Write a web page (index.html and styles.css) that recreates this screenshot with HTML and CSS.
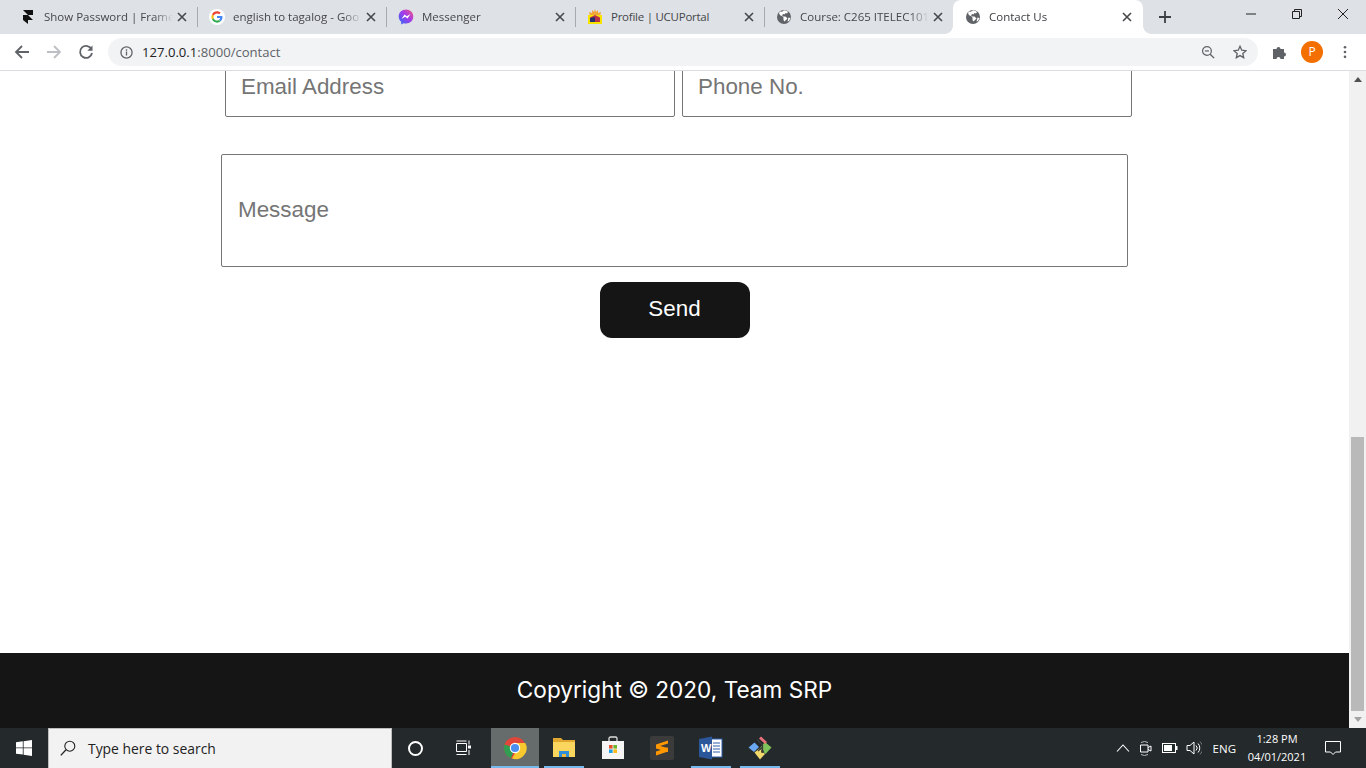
FILE: index.html
```html
<!DOCTYPE html>
<html lang="en">
<head>
  <meta charset="UTF-8">
  <meta name="viewport" content="width=device-width, initial-scale=1.0">
  <title>Contact Us</title>
  <link rel="stylesheet" href="styles.css">
</head>
<body>
  <svg class="defs" width="0" height="0">
    <symbol id="close" viewBox="0 0 10 10"><path d="M1 1l8 8M9 1l-8 8" stroke="#45474a" stroke-width="1.6" fill="none"/></symbol>
    <symbol id="globe" viewBox="0 0 16 16"><circle cx="8" cy="8" r="7" fill="#5f6368"/><path d="M8 1.200c-1 .6-1.500 1.300-2.500 1.500L4 2.400 3 4l1 2.200 2 .8 1.500 1.500V11l1 1.500L10 11l1.500-1.500-2-2H7L6 6l1.500-1 1 .5 1-1.500L11 4.500 12 3c-1-1-2.500-1.800-4-1.800z" fill="#fff"/><path d="M12.500 8.500l2 .5-1.500 3-1.500.5z" fill="#fff"/></symbol>
  </svg>

  <div class="tabstrip">
    <div class="tab">
      <svg class="favicon" viewBox="0 0 16 16"><path d="M3 1h10v5H8zM3 6h5l5 5H8v4l-5-4z" fill="#111"/></svg>
      <span class="tab-title">Show Password | Frame</span>
      <svg class="tab-close"><use href="#close"/></svg>
    </div>
    <div class="tab">
      <svg class="favicon" viewBox="0 0 48 48"><circle cx="24" cy="24" r="24" fill="#fff"/><path fill="#EA4335" d="M24 13.500c2.900 0 5 1.200 6.300 2.300l4.600-4.500C32.100 8.700 28.400 7 24 7c-6.500 0-12.200 3.700-14.900 9.200l5.300 4.100C15.700 16.300 19.500 13.500 24 13.500z"/><path fill="#4285F4" d="M40.400 24.400c0-1.400-.1-2.400-.4-3.400H24v6.200h9.400c-.2 1.500-1.200 3.900-3.500 5.400l5.200 4c3.200-2.900 5.300-7.200 5.300-12.200z"/><path fill="#FBBC05" d="M14.400 27.700c-.4-1.200-.6-2.400-.6-3.700s.2-2.500.6-3.700l-5.300-4.100C8 18.500 7.400 21.200 7.400 24s.6 5.500 1.700 7.800z"/><path fill="#34A853" d="M24 41c4.500 0 8.200-1.500 11-4l-5.200-4c-1.400 1-3.300 1.700-5.800 1.700-4.500 0-8.300-3-9.600-7l-5.300 4.100C11.800 37.300 17.500 41 24 41z"/></svg>
      <span class="tab-title">english to tagalog - Goo</span>
      <svg class="tab-close"><use href="#close"/></svg>
    </div>
    <div class="tab">
      <svg class="favicon" viewBox="0 0 16 16"><defs><linearGradient id="msgr" x1="0" y1="1" x2="1" y2="0"><stop offset="0" stop-color="#2a6cf6"/><stop offset=".55" stop-color="#a33bea"/><stop offset="1" stop-color="#f5587b"/></linearGradient></defs><path d="M8 .5C3.800.5.700 3.500.700 7.500c0 2.200 1 4 2.500 5.300v2.700l2.400-1.300c.8.200 1.600.3 2.400.3 4.200 0 7.300-3 7.300-7S12.200.5 8 .5z" fill="url(#msgr)"/><path d="M3.500 10l3-4.500 2.300 1.700L12.500 5l-3 4.500-2.300-1.700z" fill="#fff"/></svg>
      <span class="tab-title">Messenger</span>
      <svg class="tab-close"><use href="#close"/></svg>
    </div>
    <div class="tab">
      <svg class="favicon" viewBox="0 0 16 16"><path d="M8 0l1 3 2-2 0 3 3-1-1 4H3L2 3l3 1V1l2 2z" fill="#f2a63a"/><rect x="1" y="6" width="14" height="9" fill="#f7e400"/><path d="M3 13V8.500L8 6l5 2.500V13z" fill="#b8324a"/><path d="M3 13V9l5-1v5z" fill="#27306e"/></svg>
      <span class="tab-title tight">Profile | UCUPortal</span>
      <svg class="tab-close"><use href="#close"/></svg>
    </div>
    <div class="tab">
      <svg class="favicon"><use href="#globe"/></svg>
      <span class="tab-title">Course: C265 ITELEC101</span>
      <svg class="tab-close"><use href="#close"/></svg>
    </div>
    <div class="tab tab-active">
      <svg class="favicon"><use href="#globe"/></svg>
      <span class="tab-title">Contact Us</span>
      <svg class="tab-close"><use href="#close"/></svg>
    </div>
    <svg class="new-tab" viewBox="0 0 12 12"><path d="M6 0v12M0 6h12" stroke="#3c4043" stroke-width="1.800"/></svg>
    <div class="win-controls">
      <div class="win-btn"><svg viewBox="0 0 10 10"><path d="M0 5h10" stroke="#222" fill="none"/></svg></div>
      <div class="win-btn"><svg viewBox="0 0 10 10"><path d="M.5 2.500h7v7h-7zM2.500 2.500v-2h7v7h-2" stroke="#222" fill="none"/></svg></div>
      <div class="win-btn"><svg viewBox="0 0 10 10"><path d="M0 0l10 10M10 0L0 10" stroke="#222" fill="none"/></svg></div>
    </div>
  </div>

  <div class="toolbar">
    <svg class="nav-icon" viewBox="0 0 16 16"><path d="M15 8H2M8 2L2 8l6 6" stroke="#5f6368" stroke-width="1.800" fill="none"/></svg>
    <svg class="nav-icon" viewBox="0 0 16 16"><path d="M1 8h13M8 2l6 6-6 6" stroke="#bcbfc3" stroke-width="1.800" fill="none"/></svg>
    <svg class="nav-icon" viewBox="0 0 16 16"><path d="M13.600 5.500A6 6 0 1 0 14 9" stroke="#5f6368" stroke-width="1.800" fill="none"/><path d="M14.500 1.500v5.200H9.300z" fill="#5f6368"/></svg>
    <div class="omnibox">
      <svg class="info" viewBox="0 0 14 14"><circle cx="7" cy="7" r="6" stroke="#5f6368" stroke-width="1.400" fill="none"/><path d="M7 6v4.200M7 3.600v1.400" stroke="#5f6368" stroke-width="1.400"/></svg>
      <span class="url"><span class="url-host">127.0.0.1</span>:8000/contact</span>
      <svg class="omni-icon" viewBox="0 0 16 16"><circle cx="6.800" cy="6.800" r="5" stroke="#5f6368" stroke-width="1.400" fill="none"/><path d="M10.500 10.500L15 15" stroke="#5f6368" stroke-width="1.600"/><path d="M4.500 6.800h4.600" stroke="#5f6368" stroke-width="1.400"/></svg>
      <svg class="omni-icon" viewBox="0 0 16 16"><path d="M8 1.500l2 4.500 4.800.5-3.600 3.200 1 4.800L8 12.100 3.800 14.500l1-4.800L1.200 6.500 6 6z" stroke="#5f6368" stroke-width="1.500" fill="none"/></svg>
    </div>
    <svg class="puzzle" viewBox="0 0 16 16"><path d="M1 5h3.500a2 2 0 1 1 4 0H12v3.500a2 2 0 1 1 0 4V15H8.500a2 2 0 1 0-4 0H1z" fill="#5f6368"/></svg>
    <div class="avatar">P</div>
    <svg class="menu-dots" viewBox="0 0 4 16"><circle cx="2" cy="2.500" r="1.500" fill="#5f6368"/><circle cx="2" cy="8" r="1.500" fill="#5f6368"/><circle cx="2" cy="13.500" r="1.500" fill="#5f6368"/></svg>
  </div>

  <div class="viewport">
    <div class="page">
      <main class="content">
        <form class="contact-form">
          <div class="form-row">
            <input class="field" type="email" placeholder="Email Address">
            <input class="field" type="text" placeholder="Phone No.">
          </div>
          <textarea class="message" placeholder="Message"></textarea>
          <button class="send" type="button">Send</button>
        </form>
      </main>
      <footer class="site-footer">Copyright © 2020, Team SRP</footer>
    </div>
    <div class="scrollbar">
      <div class="scroll-arrow"><span class="tri-up"></span></div>
      <div class="scroll-track"></div>
      <div class="scroll-thumb"></div>
      <div class="scroll-arrow"><span class="tri-down"></span></div>
    </div>
  </div>

  <div class="taskbar">
    <div class="start">
      <svg viewBox="0 0 16 16" width="16" height="16"><path d="M0 2.300l6.800-1v6.200H0zM7.600 1.200L16 0v7.500H7.600zM0 8.300h6.800v6.300L0 13.700zM7.600 8.300H16V16l-8.400-1.200z" fill="#fff"/></svg>
    </div>
    <div class="search">
      <svg viewBox="0 0 16 16" width="16" height="16"><circle cx="9.800" cy="6.200" r="5" stroke="#222" stroke-width="1.100" fill="none"/><path d="M6 9.800L.8 15.400" stroke="#222" stroke-width="1.300"/></svg>
      <span>Type here to search</span>
    </div>
    <div class="task-btn"><span class="cortana"></span></div>
    <div class="task-btn">
      <svg viewBox="0 0 16 16" width="16" height="16"><path d="M.5 3.500h10v8H.5zM.5 1h10M.5 14.500h10M13 .5v4M13 10v5" stroke="#fff" fill="none"/><rect x="12" y="5.500" width="3" height="3" fill="#fff"/></svg>
    </div>
    <div class="apps">
      <div class="app app-active app-open">
        <svg viewBox="0 0 24 24" width="24" height="24"><circle cx="12" cy="12" r="11" fill="#e0463a"/><path d="M12 12L1.500 8.500A11 11 0 0 0 8 22.300z" fill="#2f9e52"/><path d="M12 7h10.300A11 11 0 0 1 9 22.600L14 14z" fill="#f8c92f"/><circle cx="12" cy="12" r="5.200" fill="#fff"/><circle cx="12" cy="12" r="4.100" fill="#4a8ff0"/></svg>
      </div>
      <div class="app app-open">
        <svg viewBox="0 0 24 24" width="24" height="24"><path d="M1 2h8l2 2h12v17H1z" fill="#e2a72e"/><path d="M1 6h22v15H1z" fill="#fbd65e"/><path d="M7 21v-6h10v6h-3v-3h-4v3z" fill="#2f8fd8"/><rect x="10" y="18" width="4" height="3" fill="#f1b93c"/></svg>
      </div>
      <div class="app">
        <svg viewBox="0 0 24 24" width="24" height="24"><path d="M8 5V2.500A1.500 1.500 0 0 1 9.500 1h5A1.500 1.500 0 0 1 16 2.500V5" stroke="#ddd" stroke-width="1.300" fill="none"/><path d="M1 5h22v18H1z" fill="#f5f5f5"/><rect x="8" y="9" width="3.600" height="3.600" fill="#e8502a"/><rect x="12.400" y="9" width="3.600" height="3.600" fill="#6cb52d"/><rect x="8" y="13.400" width="3.600" height="3.600" fill="#1ba1e2"/><rect x="12.400" y="13.400" width="3.600" height="3.600" fill="#fbb917"/></svg>
      </div>
      <div class="app">
        <svg viewBox="0 0 24 24" width="24" height="24"><rect width="24" height="24" rx="2" fill="#3b3b3b"/><path d="M18 4.500L6 8.500v4l12 3.500v-4L10 10l8-2.500zM6 15.500v4l12-4v-4z" fill="#ff9800"/></svg>
      </div>
      <div class="app app-open">
        <svg viewBox="0 0 24 24" width="24" height="24"><rect x="9" y="3" width="14" height="18" fill="#fff" stroke="#2f5ea8"/><path d="M14 7h7M14 10h7M14 13h7M14 16h7" stroke="#2f5ea8"/><path d="M0 3l13-2.500v23L0 21z" fill="#2b579a"/><text class="word-w" x="2" y="15.500">W</text></svg>
      </div>
      <div class="app app-open">
        <svg viewBox="0 0 24 24" width="24" height="24"><path d="M6.500 6.500L11 11l-5 5-5.500-4.500z" fill="#6aa8f2"/><path d="M17 6l6.500 5.500L17.500 18 12 12z" fill="#7fc25a"/><path d="M6.500 16.500L11.500 12.500 17 18l-5 5.500z" fill="#f2d96b"/><path d="M11 2.500L13 .5l6 5.500-2 2z" fill="#e9707a"/><path d="M9 3.500l5.500 5.500v6M14.500 11l-4.500 4" stroke="#3a3a3a" stroke-width="1.300" fill="none"/><circle cx="14.500" cy="15.500" r="1.500" fill="#3a3a3a"/></svg>
      </div>
    </div>
    <div class="tray">
      <svg class="tray-icon" viewBox="0 0 14 8" width="14" height="8"><path d="M1 7.500l6-6.500 6 6.500" stroke="#fff" stroke-width="1.100" fill="none"/></svg>
      <svg class="tray-icon" viewBox="0 0 16 16" width="16" height="16"><path d="M2.500 5h7.500v7H2.500z" stroke="#fff" fill="none"/><path d="M10 7.500l3-1.500v5l-3-1.500" stroke="#fff" fill="none"/><path d="M3 2.500a7 7 0 0 1 7 0M3 14.500a7 7 0 0 0 7 0" stroke="#bbb" fill="none"/></svg>
      <svg class="tray-icon" viewBox="0 0 16 10" width="16" height="10"><rect x=".5" y=".5" width="13" height="9" stroke="#fff" fill="none"/><rect x="2" y="2" width="8" height="6" fill="#fff"/><rect x="14" y="3" width="1.500" height="4" fill="#fff"/></svg>
      <svg class="tray-icon" viewBox="0 0 16 16" width="16" height="16"><path d="M1 5.500h3L8 2v12l-4-3.500H1z" stroke="#fff" fill="none"/><path d="M10 5.500a3.500 3.500 0 0 1 0 5M12 3.500a6.500 6.500 0 0 1 0 9" stroke="#fff" fill="none"/><path d="M14 1.500a9 9 0 0 1 0 13" stroke="#777" fill="none"/></svg>
      <span class="lang">ENG</span>
      <div class="clock"><span>1:28 PM</span><span>04/01/2021</span></div>
      <svg class="notif" viewBox="0 0 16 16" width="16" height="16"><path d="M.5 1.500h15v10.500h-5L8 14.500 5.500 12h-5z" stroke="#fff" fill="none"/></svg>
    </div>
  </div>
</body>
</html>
```

FILE: styles.css
```css
* {
  box-sizing: border-box;
  margin: 0;
  padding: 0;
}

body {
  display: flex;
  flex-direction: column;
  width: 1366px;
  height: 768px;
  overflow: hidden;
  background: #fff;
  font-family: "Open Sans", "Liberation Sans", sans-serif;
}

.defs {
  display: block;
  height: 0;
}

/* browser tabs */
.tabstrip {
  display: flex;
  align-items: center;
  height: 34px;
  padding-left: 8px;
  background: #dee1e6;
}

.tab {
  display: flex;
  align-items: center;
  width: 189px;
  height: 34px;
  padding: 0 10px 0 12px;
  position: relative;
  font-size: 11.5px;
  color: #45474a;
}

.tab::after {
  content: '';
  position: absolute;
  right: -1px;
  top: 7px;
  height: 20px;
  border-right: 1px solid #a6a9ad;
}

.tab:nth-child(5)::after {
  border-right: 0;
}

.tab-active {
  width: 190px;
  padding-right: 11px;
  background: #fff;
  border-radius: 8px 8px 0 0;
  color: #3c4043;
}

/* the flared bottom corners of the open tab */
.tab-active::before,
.tab-active::after {
  content: '';
  position: absolute;
  top: auto;
  bottom: 0;
  width: 8px;
  height: 8px;
  border: 0;
}

.tab-active::before {
  left: -8px;
  background: radial-gradient(circle at 0 0, #dee1e6 7.5px, #fff 8px);
}

.tab-active::after {
  right: -8px;
  background: radial-gradient(circle at 100% 0, #dee1e6 7.5px, #fff 8px);
}

.favicon {
  flex: none;
  width: 16px;
  height: 16px;
  margin-right: 8px;
}

.tab-title {
  flex: 1;
  padding-bottom: 2px;
  overflow: hidden;
  white-space: nowrap;
  -webkit-mask-image: linear-gradient(to right, #000 85%, transparent);
  mask-image: linear-gradient(to right, #000 85%, transparent);
}

.tab-title.tight {
  letter-spacing: -0.25px;
  -webkit-mask-image: none;
  mask-image: none;
}

.tab-close {
  flex: none;
  width: 10px;
  height: 10px;
  margin-left: 4px;
}

.new-tab {
  width: 12px;
  height: 12px;
  margin-left: 16px;
}

.win-controls {
  display: flex;
  margin-left: auto;
  align-self: flex-start;
}

.win-btn {
  display: flex;
  align-items: center;
  justify-content: center;
  width: 46px;
  height: 28px;
}

.win-btn svg {
  width: 10px;
  height: 10px;
}

/* address bar */
.toolbar {
  display: flex;
  align-items: center;
  height: 37px;
  background: #fff;
  border-bottom: 1px solid #dadce0;
}

.nav-icon {
  width: 16px;
  height: 16px;
  margin-left: 14px;
  margin-right: 2px;
}

.omnibox {
  display: flex;
  align-items: center;
  width: 1150px;
  height: 28px;
  margin-left: 12px;
  padding: 0 11px 0 12px;
  border-radius: 14px;
  background: #f1f3f4;
}

.info {
  width: 13px;
  height: 13px;
  margin-right: 9px;
}

.url {
  flex: 1;
  font-size: 13.1px;
  color: #5f6368;
}

.url-host {
  color: #202124;
}

.omni-icon {
  width: 14px;
  height: 14px;
  margin-left: 18px;
}

.puzzle {
  width: 16px;
  height: 16px;
  margin-left: 14px;
}

.avatar {
  width: 22px;
  height: 22px;
  margin-left: 13px;
  border-radius: 50%;
  background: #f36f00;
  color: #fff;
  font-size: 12px;
  line-height: 22px;
  text-align: center;
}

.menu-dots {
  width: 4px;
  height: 14px;
  margin-left: 20px;
}

/* the page itself, scrolled down */
.viewport {
  display: flex;
  flex: 1;
  min-height: 0;
}

.page {
  display: flex;
  flex-direction: column;
  flex: 1;
}

.content {
  flex: 1;
  overflow: hidden;
}

.contact-form {
  display: flex;
  flex-direction: column;
  align-items: center;
  width: 907px;
  margin: -16px auto 0;
  font-family: "Liberation Sans", Arial, sans-serif;
}

.form-row {
  display: flex;
  gap: 7px;
  margin-left: 8px;
}

.field,
.message {
  border: 1px solid #767676;
  border-radius: 2px;
  padding-left: 15px;
  font-family: inherit;
  font-size: 22.4px;
  background: #fff;
}

.field {
  width: 450px;
  height: 62px;
  padding-top: 2px;
}

.message {
  display: block;
  width: 907px;
  height: 113px;
  margin-top: 37px;
  padding-top: 42px;
  padding-left: 16px;
  line-height: 26px;
  resize: none;
}

.send {
  width: 150px;
  height: 56px;
  margin-top: 15px;
  padding-bottom: 2px;
  border: 0;
  border-radius: 12px;
  background: #151515;
  color: #fff;
  font-family: inherit;
  font-size: 22.4px;
}

.site-footer {
  height: 75px;
  background: #151515;
  color: #fff;
  font-family: Inter, "Liberation Sans", sans-serif;
  font-size: 22.6px;
  line-height: 73px;
  text-align: center;
}

.scrollbar {
  display: flex;
  flex-direction: column;
  width: 17px;
  background: #f1f1f1;
}

.scroll-arrow {
  display: flex;
  align-items: center;
  justify-content: center;
  height: 17px;
}

.tri-up {
  border: 4px solid transparent;
  border-top: 0;
  border-bottom: 5px solid #505050;
}

.tri-down {
  border: 4px solid transparent;
  border-bottom: 0;
  border-top: 5px solid #a3a3a3;
}

.scroll-track {
  flex: 1;
}

.scroll-thumb {
  width: 13px;
  height: 274px;
  margin-left: 2px;
  background: #b9b9b9;
}

/* windows taskbar */
.taskbar {
  display: flex;
  align-items: center;
  height: 40px;
  background: #24292b;
  color: #fff;
  font-family: "Open Sans", "Liberation Sans", sans-serif;
}

.start {
  display: flex;
  align-items: center;
  justify-content: center;
  width: 48px;
  height: 40px;
}

.search {
  display: flex;
  align-items: center;
  gap: 12px;
  width: 344px;
  height: 40px;
  padding: 0 0 1px 11px;
  background: #f2f2f2;
  border: 1px solid #bdbdbd;
  border-bottom: 0;
  color: #222;
  font-size: 13.9px;
}

.task-btn {
  display: flex;
  align-items: center;
  justify-content: center;
  width: 48px;
  height: 40px;
}

.cortana {
  width: 15px;
  height: 15px;
  margin-right: 2px;
  border: 2px solid #fff;
  border-radius: 50%;
}

.apps {
  display: flex;
  margin-left: 3px;
}

.app {
  display: flex;
  align-items: center;
  justify-content: center;
  width: 49px;
  height: 40px;
  padding-right: 2px;
  position: relative;
}

.app-open::after {
  content: '';
  position: absolute;
  left: 4px;
  right: 5px;
  bottom: 0;
  height: 2px;
  background: #76b9ed;
}

.app-active {
  background: linear-gradient(to right, #666b6b 48px, transparent 48px);
}

.app-active::after {
  left: 0;
  right: 1px;
}

.word-w {
  font-family: "Liberation Sans", sans-serif;
  font-size: 11px;
  font-weight: 700;
  fill: #fff;
}

.tray {
  display: flex;
  align-items: center;
  margin-left: auto;
  height: 40px;
}

.tray-icon {
  margin-right: 8px;
}

.lang {
  margin-left: 3px;
  font-size: 11.5px;
}

.clock {
  display: flex;
  flex-direction: column;
  align-items: center;
  width: 60px;
  margin-left: 11px;
  font-size: 11px;
  line-height: 18.5px;
}

.notif {
  margin: 0 25px 0 18px;
}
```
